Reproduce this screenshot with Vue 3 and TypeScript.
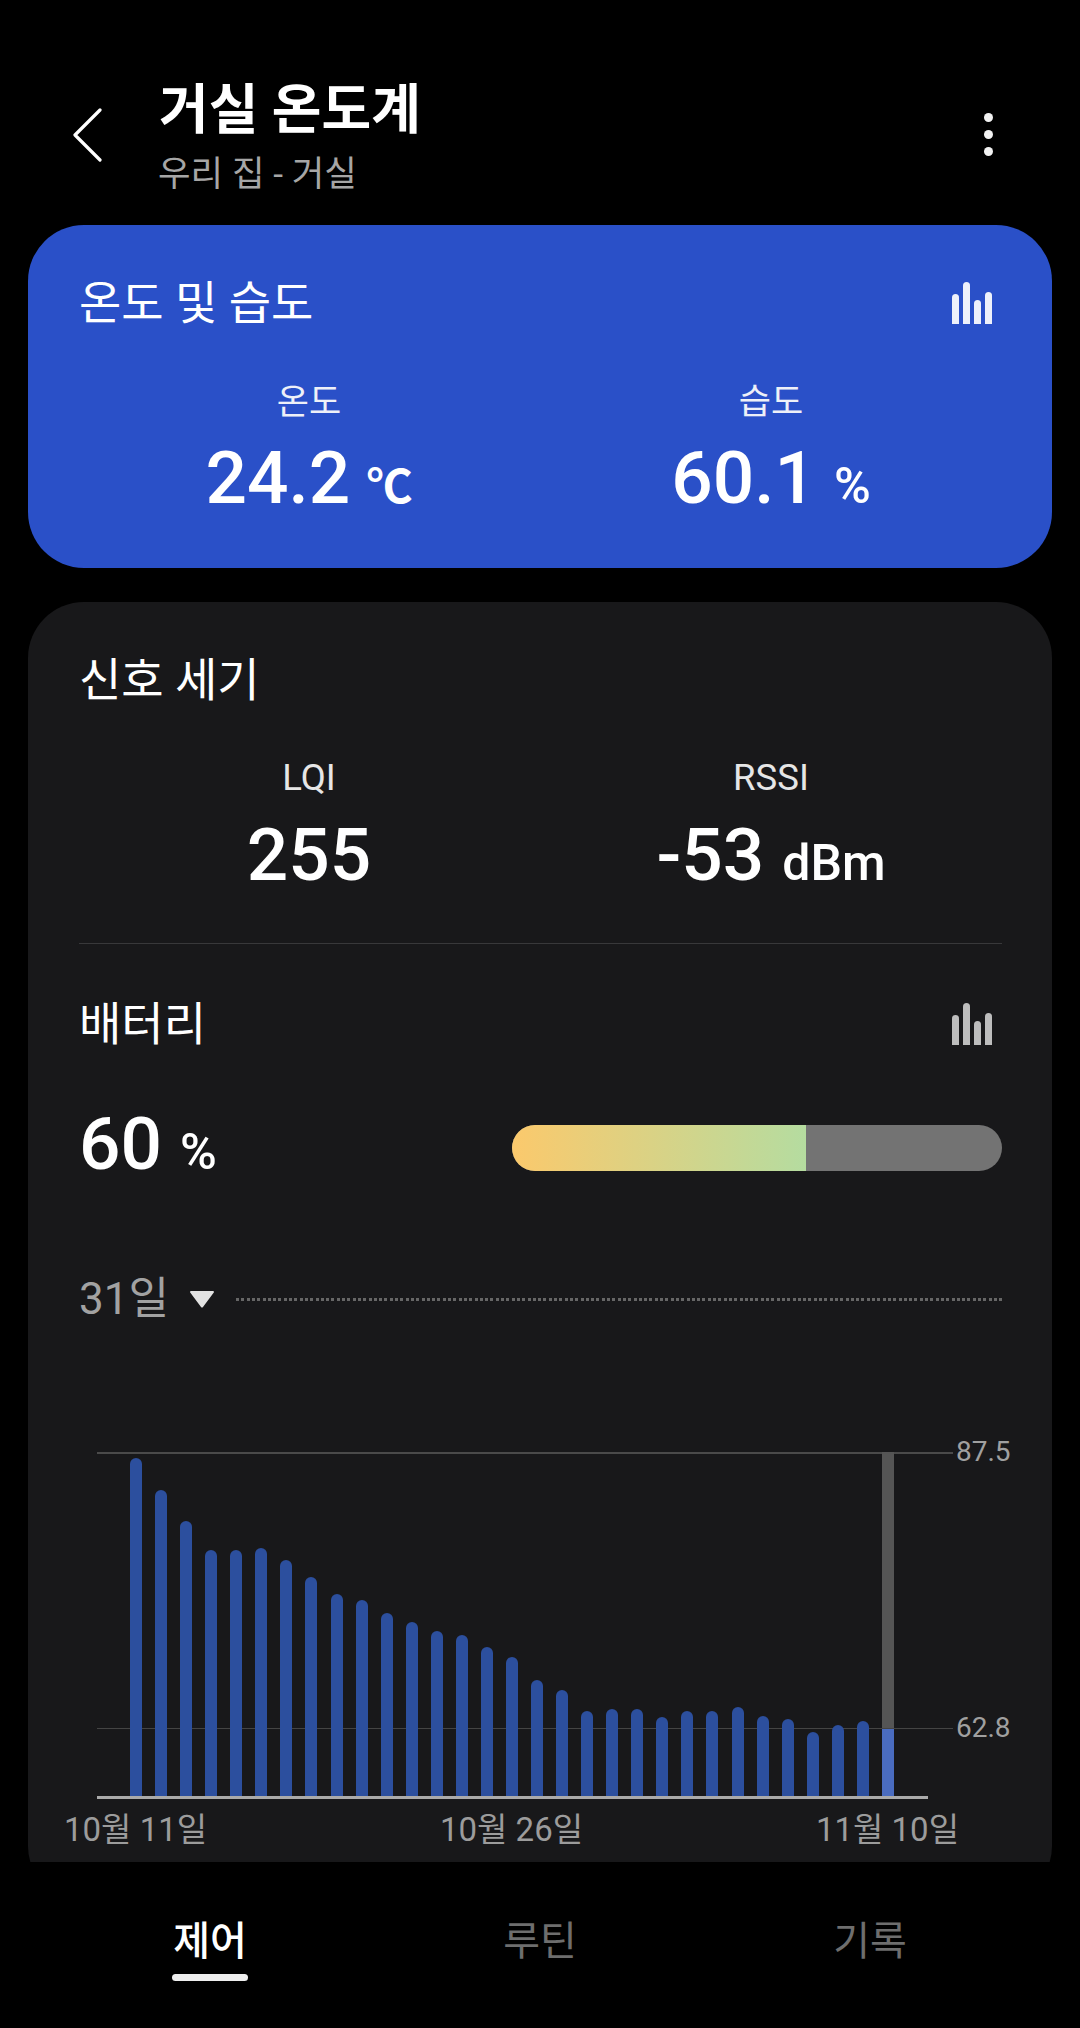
<script setup lang="ts">
const tops: number[] = [112, 208, 300, 389, 389, 382, 418, 468, 519, 539, 578, 603, 632, 642, 680, 708, 778, 808, 871, 865, 866, 889, 872, 872, 860, 887, 895, 933, 914, 902, 926]
const bars = tops.map((t, i) => ({ h: (1132 - t) / 3 - 2, last: i === tops.length - 1 }))
const tabs = [
  { label: '제어', active: true },
  { label: '루틴', active: false },
  { label: '기록', active: false },
]
</script>

<template>
  <div class="screen">
    <div class="scroll">
      <header class="top">
        <svg class="back" width="32" height="54" viewBox="0 0 32 54"><path d="M28 2 3 27l25 25" fill="none" stroke="#fff" stroke-width="3.2" stroke-linecap="round" stroke-linejoin="round"/></svg>
        <div class="titles">
          <div class="title">거실 온도계</div>
          <div class="sub">우리 집 - 거실</div>
        </div>
        <div class="more"><i></i><i></i><i></i></div>
      </header>

      <section class="card blue">
        <div class="head">
          <h2>온도 및 습도</h2>
          <div class="bars-icon"><i class="a"></i><i class="b"></i><i class="c"></i><i class="d"></i></div>
        </div>
        <div class="stats">
          <div class="stat"><div class="lab">온도</div><div class="val">24.2<span class="unit cel">℃</span></div></div>
          <div class="stat"><div class="lab">습도</div><div class="val">60.1<span class="unit">%</span></div></div>
        </div>
      </section>

      <section class="card dark">
        <h2 class="signal">신호 세기</h2>
        <div class="stats sig">
          <div class="stat"><div class="lab">LQI</div><div class="val">255</div></div>
          <div class="stat"><div class="lab">RSSI</div><div class="val">-53<span class="unit">dBm</span></div></div>
        </div>
        <div class="rule"></div>
        <div class="head batt-head">
          <h2>배터리</h2>
          <div class="bars-icon grey"><i class="a"></i><i class="b"></i><i class="c"></i><i class="d"></i></div>
        </div>
        <div class="batt">
          <div class="val">60<span class="unit">%</span></div>
          <div class="meter"><div class="fill"></div></div>
        </div>
        <div class="range">
          <span class="days">31일</span>
          <svg width="26" height="20" viewBox="0 0 26 20"><path d="M2 2h22a1 1 0 0 1 .8 1.6L14 18a1.3 1.3 0 0 1-2 0L1.2 3.6A1 1 0 0 1 2 2z" fill="#e2e2e2"/></svg>
          <div class="dots"></div>
        </div>
        <div class="chart">
          <div class="grid g1"><span>87.5</span></div>
          <div class="grid g2"><span>62.8</span></div>
          <div class="cursor"></div>
          <div class="plot">
            <div v-for="(b, i) in bars" :key="i" class="bar" :class="{ last: b.last }" :style="{ height: b.h + 'px' }"></div>
          </div>
        </div>
        <div class="dates"><span>10월 11일</span><span>10월 26일</span><span>11월 10일</span></div>
      </section>
    </div>

    <nav class="tabs">
      <div v-for="t in tabs" :key="t.label" class="tab" :class="{ on: t.active }"><span>{{ t.label }}</span></div>
    </nav>
  </div>
</template>

<style>
html, body { margin: 0; background: #000; }
</style>

<style scoped>
* { box-sizing: border-box; }
.screen {
  width: 1080px; height: 2028px; background: #000; color: #fff; overflow: hidden;
  font-family: Roboto, "Noto Sans CJK KR", sans-serif;
  display: flex; flex-direction: column;
}
.scroll { height: 1862px; overflow: hidden; padding: 0 28px; border-radius: 0 0 26px 26px; flex: none; }
.top { height: 225px; display: flex; align-items: flex-start; margin: 0 -28px; padding: 0 87px 0 72px; }
.back { margin-top: 108px; flex: none; }
.titles { margin-left: 55px; flex: 1; }
.title { font-size: 54px; font-weight: 700; line-height: 60px; margin-top: 81px; }
.sub { font-size: 35.4px; line-height: 42px; color: #a6a6a6; margin: 12px 0 0 -1px; }
.more { display: flex; flex-direction: column; gap: 8px; margin-top: 113px; }
.more i { width: 9px; height: 9px; border-radius: 50%; background: #f2f2f2; display: block; }
.card { border-radius: 56px; padding: 0 50px 0 51px; }
.blue { background: #2a50c8; height: 343px; margin-bottom: 34px; }
.dark { background: #18181a; height: 1300px; }
h2 { margin: 0; font-size: 46px; font-weight: 400; line-height: 50px; }
.head { display: flex; justify-content: space-between; align-items: center; }
.blue .head { padding-top: 53px; }
.bars-icon { display: flex; align-items: flex-end; gap: 4.4px; height: 42px; margin-right: 10px; }
.bars-icon i { width: 6.6px; border-radius: 4px 4px 0 0; background: #eef1fb; display: block; }
.bars-icon .a { height: 30px; }
.bars-icon .b { height: 42px; }
.bars-icon .c { height: 24px; }
.bars-icon .d { height: 32px; }
.bars-icon.grey i { background: #bdbdbd; }
.stats { display: flex; margin: 0 -50px 0 -51px; padding: 0 50px; }
.blue .stats { padding-top: 54px; }
.stat { flex: 1; text-align: center; }
.lab { font-size: 35px; line-height: 42px; color: #eef0f8; }
.val { font-size: 73px; font-weight: 500; line-height: 82px; margin-top: 13px; }
.unit { font-size: 50px; font-weight: 500; margin-left: 18px; }
.cel { font-size: 46px; font-weight: 700; margin-left: 16px; }
.signal { padding-top: 53px; }
.sig { padding-top: 52px; }
.sig .lab { color: #e6e6e6; font-size: 36.5px; }
.sig .val { margin-top: 15px; }
.rule { height: 1px; background: #38383a; margin-top: 39px; }
.batt-head { padding-top: 55px; }
.batt { display: flex; align-items: center; justify-content: space-between; margin-top: 54px; }
.batt .val { margin: 0; }
.meter { width: 490px; height: 46px; border-radius: 23px; background: #737373; overflow: hidden; flex: none; }
.fill { width: 60%; height: 100%; background: linear-gradient(90deg, #fbc96c, #b5dca0); }
.range { display: flex; align-items: center; margin-top: 81px; }
.days { font-size: 44px; line-height: 50px; color: #a2a2a2; }
.range svg { margin-left: 20px; margin-right: 21px; flex: none; }
.dots { flex: 1; height: 3px; background: repeating-linear-gradient(90deg, #666 0 3px, transparent 3px 5.3px); }
.chart { position: relative; height: 347px; margin: 128px 0 0 -51px; }
.grid { position: absolute; left: 69px; height: 2px; width: 856px; background: #4a4a4a; }
.g1 { top: 0; }
.g2 { top: 276px; height: 1px; background: #444; }
.grid span { position: absolute; left: 859px; top: -16px; font-size: 28px; line-height: 32px; color: #a0a0a0; }
.cursor { position: absolute; left: 854px; top: 0; width: 12px; height: 276px; background: #555; }
.plot { position: absolute; left: 69px; top: 0; width: 831px; height: 347px; border-bottom: 3px solid #aaa; display: flex; align-items: flex-end; gap: 13.07px; padding-left: 33px; }
.bar { width: 12px; flex: none; background: #2c4f9e; border-radius: 6px 6px 0 0; }
.bar.last { background: #4a6cc0; border-radius: 0; }
.dates { display: flex; justify-content: space-between; width: 895px; margin: 9px 0 0 -15px; font-size: 33px; line-height: 44px; color: #9c9c9c; }
.tabs { flex: 1; display: flex; padding-left: 45px; }
.tab { width: 330px; text-align: center; padding-top: 53px; }
.tab span { display: inline-block; font-size: 40px; line-height: 54px; color: #6e6e6e; }
.tab.on span { color: #fff; font-weight: 500; }
.tab.on span::after { content: ""; display: block; height: 7px; margin: 5px -1px 0; border-radius: 4px; background: #eee; }
</style>
